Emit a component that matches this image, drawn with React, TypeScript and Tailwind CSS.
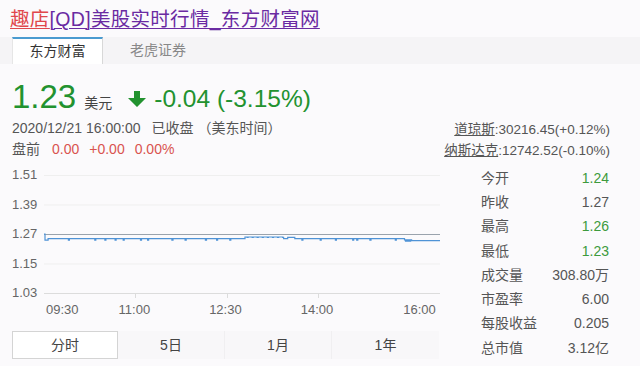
import React from "react";

const FONT = { fontFamily: '"Liberation Sans", "Noto Sans CJK SC", sans-serif' };

// price -> y inside the plot svg (gridlines at 7 .. 125)
const py = (p: number) => 7 + ((1.51 - p) / 0.48) * 118;

const DIPS = [24, 50, 60, 70, 78, 95, 102, 126, 139, 159, 170, 183, 254, 272, 287, 304, 308, 321, 346, 360];

function priceAt(i: number) {
  if (i === 0) return 1.27;
  if (i < 4) return 1.245;
  if (i >= 362) return 1.243;
  if (i >= 355) return i % 2 === 0 ? 1.241 : 1.246;
  if (DIPS.includes(i)) return 1.245;
  if (i >= 198 && i <= 235) return i % 5 === 0 ? 1.256 : 1.258;
  if (i >= 240 && i <= 246) return 1.256;
  return 1.251;
}

function linePath() {
  let d = "";
  let prev = 0;
  for (let i = 0; i <= 390; i++) {
    const x = (i / 390) * 396;
    const y = py(priceAt(i));
    if (i === 0) d += `M${x.toFixed(1)},${y.toFixed(1)}`;
    else d += `L${x.toFixed(1)},${prev.toFixed(1)}L${x.toFixed(1)},${y.toFixed(1)}`;
    prev = y;
  }
  return d;
}

function PriceChart() {
  const grid = [1.51, 1.39, 1.27, 1.15, 1.03];
  return (
    <div>
      <div className="flex">
        <div className="flex h-[132px] w-[32px] flex-col justify-between text-[13px] text-[#666]">
          {grid.map((g) => (
            <span key={g} className="h-[14px] leading-[14px]">
              {g.toFixed(2)}
            </span>
          ))}
        </div>
        <svg width={396} height={132} className="block">
          {grid.map((g, idx) => (
            <line
              key={g}
              x1={0}
              x2={396}
              y1={py(g) + 0.5}
              y2={py(g) + 0.5}
              stroke={idx === 2 ? "#9aa3ad" : idx === 4 ? "#dcdcdc" : "#efefef"}
              strokeWidth={1}
            />
          ))}
          {[91, 183, 274].map((x) => (
            <line key={x} x1={x + 0.5} x2={x + 0.5} y1={py(1.03)} y2={py(1.03) + 5} stroke="#dcdcdc" />
          ))}
          <path d={linePath()} fill="none" stroke="#4f93d6" strokeWidth={1.2} />
        </svg>
      </div>
      <div className="mt-[2px] flex pl-[34px] text-[13px] leading-[16px] text-[#666]">
        <span>09:30</span>
        <span className="ml-[40px]">11:00</span>
        <span className="ml-[59px]">12:30</span>
        <span className="ml-[59px]">14:00</span>
        <span className="ml-[70px]">16:00</span>
      </div>
    </div>
  );
}

const STATS: { label: string; value: string; green?: boolean }[] = [
  { label: "今开", value: "1.24", green: true },
  { label: "昨收", value: "1.27" },
  { label: "最高", value: "1.26", green: true },
  { label: "最低", value: "1.23", green: true },
  { label: "成交量", value: "308.80万" },
  { label: "市盈率", value: "6.00" },
  { label: "每股收益", value: "0.205" },
  { label: "总市值", value: "3.12亿" },
];

export default function App() {
  return (
    <div className="h-[366px] w-[640px] overflow-hidden bg-[#fbfafc]" style={FONT}>
      <div className="pl-[10px] pt-[7px] text-[19.5px] leading-[24px] tracking-[0.3px]">
        <a className="text-[#e0474c] underline decoration-1 underline-offset-2">趣店</a>
        <a className="text-[#6a2aa2] underline decoration-1 underline-offset-2">[QD]美股实时行情_东方财富网</a>
      </div>

      <div className="mt-[6px] flex h-[27px] bg-[#f5f4f6] pl-[12px] text-[14px]">
        <div className="flex w-[91px] items-center justify-center border-l border-r border-t-2 border-l-[#e6e6e6] border-r-[#d8d8d8] border-t-[#4a9bd0] bg-white text-[#333]">
          东方财富
        </div>
        <div className="flex w-[110px] items-center justify-center text-[#888]">老虎证券</div>
      </div>

      <div className="flex">
        <div className="w-[445px] shrink-0 pl-[12px]">
          <div className="mt-[16px] flex h-[34px] items-end text-[#22922f]">
            <span className="text-[33px] leading-[34px]">1.23</span>
            <span className="mb-[3px] ml-[8px] text-[14px] leading-[16px] text-[#444]">美元</span>
            <svg width={18} height={16} viewBox="0 0 18 16" className="mb-[7px] ml-[16px]">
              <path d="M6 0h6v7h6L9 16 0 7h6z" fill="#22922f" />
            </svg>
            <span className="mb-[1px] ml-[8px] text-[24.5px] leading-[28px]">-0.04 (-3.15%)</span>
          </div>
          <div className="mt-[4px] flex text-[14px] leading-[20px] text-[#555]">
            <span>2020/12/21 16:00:00</span>
            <span className="ml-[11px]">已收盘</span>
            <span className="ml-[4px]">（美东时间）</span>
          </div>
          <div className="mt-[1px] flex text-[14px] leading-[20px]">
            <span className="text-[#555]">盘前</span>
            <span className="ml-[12px] text-[#d9534f]">0.00</span>
            <span className="ml-[10px] text-[#d9534f]">+0.00</span>
            <span className="ml-[10px] text-[#d9534f]">0.00%</span>
          </div>
          <div className="mt-[9px]">
            <PriceChart />
          </div>
          <div className="mt-[13px] flex h-[28px] text-[14px] text-[#444]">
            <div className="flex w-[106px] items-center justify-center border border-[#d4d4d4] bg-white">分时</div>
            <div className="flex w-[107px] items-center justify-center border-r border-[#f0eff1] bg-[#f8f7f9]">5日</div>
            <div className="flex w-[107px] items-center justify-center border-r border-[#f0eff1] bg-[#f8f7f9]">1月</div>
            <div className="flex w-[107px] items-center justify-center bg-[#f8f7f9]">1年</div>
          </div>
        </div>

        <div className="w-[195px] shrink-0">
          <div className="mt-[55px] flex flex-col items-end whitespace-nowrap pr-[30px] text-[13.5px] leading-[21px] text-[#555]">
            <div>
              <span className="underline">道琼斯</span>:30216.45(+0.12%)
            </div>
            <div>
              <span className="underline">纳斯达克</span>:12742.52(-0.10%)
            </div>
          </div>
          <div className="ml-[36px] mt-[5px] w-[128px] text-[14px] text-[#555]">
            {STATS.map((s) => (
              <div key={s.label} className="flex h-[24.3px] items-center justify-between">
                <span>{s.label}</span>
                <span className={s.green ? "text-[#3d9a3d]" : "text-[#555]"}>{s.value}</span>
              </div>
            ))}
          </div>
        </div>
      </div>
    </div>
  );
}
